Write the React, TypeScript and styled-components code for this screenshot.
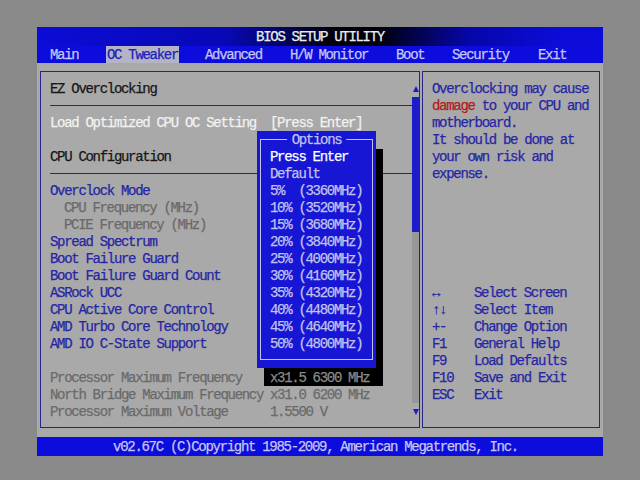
import React from 'react';
import styled, { createGlobalStyle } from 'styled-components';

type Tone = 'head' | 'white' | 'blue' | 'gray';

const TONES: Record<Tone, string> = {
  head: '#161616',
  white: '#f2f2f2',
  blue: '#2626a4',
  gray: '#6a6a6a',
};

const GlobalStyle = createGlobalStyle`
  html, body {
    margin: 0;
    padding: 0;
  }
  body {
    width: 640px;
    height: 480px;
    overflow: hidden;
    background: #8a8a8a;
    font-family: 'Liberation Mono', 'DejaVu Sans Mono', monospace;
    font-size: 14px;
    letter-spacing: -1.3px;
    -webkit-text-stroke: 0.25px currentColor;
  }
`;

const Screen = styled.div`
  width: 566px;
  margin: 27px 0 0 37px;
  display: flex;
  flex-direction: column;
`;

const TitleBar = styled.div`
  height: 19px;
  line-height: 21px;
  text-align: center;
  color: #ececec;
  background: linear-gradient(to right, #0c0cd8 0%, #0808b4 34%, #00000c 52%, #000008 60%, #0606a8 76%, #0c0cd8 92%);
`;

const MenuBar = styled.div`
  height: 17px;
  display: flex;
  padding-left: 13px;
  background: #0c0cdc;
`;

const Tab = styled.div<{ $w?: number }>`
  flex: none;
  width: ${(p) => (p.$w ? `${p.$w}px` : 'auto')};
`;

const TabLabel = styled.span<{ $active?: boolean }>`
  display: inline-block;
  height: 17px;
  line-height: 19px;
  overflow: hidden;
  padding: 0 1px;
  margin-left: -1px;
  color: ${(p) => (p.$active ? '#2020c0' : '#c6c6f2')};
  background: ${(p) => (p.$active ? '#b4b4c4' : 'transparent')};
`;

const Body = styled.div`
  height: 374px;
  box-sizing: border-box;
  padding: 8px 3px 9px;
  display: flex;
  gap: 2px;
  background: #a9a9a9;
`;

const LeftPanel = styled.div`
  position: relative;
  width: 380px;
  box-sizing: border-box;
  border: 1px solid #24248c;
  display: flex;
`;

const Content = styled.div`
  flex: 1;
  padding: 8px 0 0 9px;
`;

const Row = styled.div<{ $tone: Tone; $indent?: boolean }>`
  height: 17px;
  line-height: 19px;
  display: grid;
  grid-template-columns: 220px auto;
  white-space: pre;
  color: ${(p) => TONES[p.$tone]};
  padding-left: ${(p) => (p.$indent ? '14px' : '0')};
`;

const Rule = styled.div`
  height: 17px;
  display: flex;
  align-items: center;
  &::after {
    content: '';
    flex: 1;
    height: 1px;
    background: #24248c;
  }
`;

const Shaded = styled.span`
  position: relative;
  z-index: 2;
  display: block;
  width: 113px;
  height: 17px;
  margin-left: -6px;
  padding-left: 6px;
  background: #000;
  color: #8a8a8a;
`;

const Scroll = styled.div`
  width: 7px;
  padding-top: 8px;
  display: flex;
  flex-direction: column;
`;

const ArrowCell = styled.div`
  height: 17px;
  display: flex;
  align-items: center;
  justify-content: center;
`;

const Arrow = styled.div<{ $down?: boolean }>`
  width: 0;
  height: 0;
  border-left: 3px solid transparent;
  border-right: 3px solid transparent;
  ${(p) => (p.$down ? 'border-top: 6px solid #1c1cc4;' : 'border-bottom: 6px solid #1c1cc4;')}
`;

const Thumb = styled.div`
  height: 135px;
  background: #1c1cc8;
`;

const Track = styled.div`
  height: 171px;
  background: #979797;
`;

const Popup = styled.div`
  position: absolute;
  z-index: 1;
  left: 216px;
  top: 59px;
  width: 119px;
  height: 237px;
  box-sizing: border-box;
  padding: 8px 3px;
  background: #1616d4;
  box-shadow: 7px 18px 0 #000;
`;

const PopupFrame = styled.div`
  position: relative;
  height: 100%;
  box-sizing: border-box;
  border: 1px solid #c2c2ee;
  padding: 8px 0 0 9px;
`;

const PopupTitle = styled.div`
  position: absolute;
  top: -9px;
  left: 50%;
  transform: translateX(-50%);
  height: 17px;
  line-height: 19px;
  padding: 0 5px;
  background: #1616d4;
  color: #c2c2ee;
`;

const Option = styled.div<{ $current?: boolean }>`
  height: 17px;
  line-height: 19px;
  white-space: pre;
  color: ${(p) => (p.$current ? '#ffffff' : '#c2c2ee')};
`;

const RightPanel = styled.div`
  width: 178px;
  box-sizing: border-box;
  border: 1px solid #24248c;
  padding: 8px 0 24px 9px;
  display: flex;
  flex-direction: column;
  color: #2626a4;
`;

const HelpLine = styled.div`
  height: 17px;
  line-height: 19px;
  white-space: pre;
`;

const Warn = styled.span`
  color: #b41a1a;
`;

const Keys = styled.div`
  margin-top: auto;
`;

const KeyRow = styled.div`
  height: 17px;
  line-height: 19px;
  display: grid;
  grid-template-columns: 42px auto;
  white-space: pre;
`;

const Footer = styled.div`
  height: 19px;
  line-height: 20px;
  text-align: center;
  padding-right: 9px;
  color: #c6c6f2;
  background: #0c0cdc;
`;

const TABS: { label: string; w?: number; active?: boolean }[] = [
  { label: 'Main', w: 57 },
  { label: 'OC Tweaker', w: 98, active: true },
  { label: 'Advanced', w: 85 },
  { label: 'H/W Monitor', w: 106 },
  { label: 'Boot', w: 56 },
  { label: 'Security', w: 86 },
  { label: 'Exit' },
];

const ITEMS: { label: string; tone: Tone; indent?: boolean }[] = [
  { label: 'Overclock Mode', tone: 'blue' },
  { label: 'CPU Frequency (MHz)', tone: 'gray', indent: true },
  { label: 'PCIE Frequency (MHz)', tone: 'gray', indent: true },
  { label: 'Spread Spectrum', tone: 'blue' },
  { label: 'Boot Failure Guard', tone: 'blue' },
  { label: 'Boot Failure Guard Count', tone: 'blue' },
  { label: 'ASRock UCC', tone: 'blue' },
  { label: 'CPU Active Core Control', tone: 'blue' },
  { label: 'AMD Turbo Core Technology', tone: 'blue' },
  { label: 'AMD IO C-State Support', tone: 'blue' },
];

const OPTIONS = [
  'Default',
  '5%  (3360MHz)',
  '10% (3520MHz)',
  '15% (3680MHz)',
  '20% (3840MHz)',
  '25% (4000MHz)',
  '30% (4160MHz)',
  '35% (4320MHz)',
  '40% (4480MHz)',
  '45% (4640MHz)',
  '50% (4800MHz)',
];

const KEYS = [
  ['↔', 'Select Screen'],
  ['↑↓', 'Select Item'],
  ['+-', 'Change Option'],
  ['F1', 'General Help'],
  ['F9', 'Load Defaults'],
  ['F10', 'Save and Exit'],
  ['ESC', 'Exit'],
];

const App = () => (
  <>
    <GlobalStyle />
    <Screen>
      <TitleBar>BIOS SETUP UTILITY</TitleBar>
      <MenuBar>
        {TABS.map((t) => (
          <Tab key={t.label} $w={t.w}>
            <TabLabel $active={t.active}>{t.label}</TabLabel>
          </Tab>
        ))}
      </MenuBar>
      <Body>
        <LeftPanel>
          <Content>
            <Row $tone="head">EZ Overclocking</Row>
            <Rule />
            <Row $tone="white">
              <span>Load Optimized CPU OC Setting</span>
              <span>[Press Enter]</span>
            </Row>
            <Row $tone="head" />
            <Row $tone="head">CPU Configuration</Row>
            <Rule />
            {ITEMS.map((it) => (
              <Row key={it.label} $tone={it.tone} $indent={it.indent}>
                {it.label}
              </Row>
            ))}
            <Row $tone="gray" />
            <Row $tone="gray">
              <span>Processor Maximum Frequency</span>
              <Shaded>x31.5 6300 MHz</Shaded>
            </Row>
            <Row $tone="gray">
              <span>North Bridge Maximum Frequency</span>
              <span>x31.0 6200 MHz</span>
            </Row>
            <Row $tone="gray">
              <span>Processor Maximum Voltage</span>
              <span>1.5500 V</span>
            </Row>
          </Content>
          <Scroll>
            <ArrowCell><Arrow /></ArrowCell>
            <Thumb />
            <Track />
            <ArrowCell><Arrow $down /></ArrowCell>
          </Scroll>
          <Popup>
            <PopupFrame>
              <PopupTitle>Options</PopupTitle>
              <Option $current>Press Enter</Option>
              {OPTIONS.map((o) => (
                <Option key={o}>{o}</Option>
              ))}
            </PopupFrame>
          </Popup>
        </LeftPanel>
        <RightPanel>
          <HelpLine>Overclocking may cause</HelpLine>
          <HelpLine><Warn>damage</Warn> to your CPU and</HelpLine>
          <HelpLine>motherboard.</HelpLine>
          <HelpLine>It should be done at</HelpLine>
          <HelpLine>your own risk and</HelpLine>
          <HelpLine>expense.</HelpLine>
          <Keys>
            {KEYS.map(([k, d]) => (
              <KeyRow key={k}>
                <span>{k}</span>
                <span>{d}</span>
              </KeyRow>
            ))}
          </Keys>
        </RightPanel>
      </Body>
      <Footer>v02.67C (C)Copyright 1985-2009, American Megatrends, Inc.</Footer>
    </Screen>
  </>
);

export default App;
